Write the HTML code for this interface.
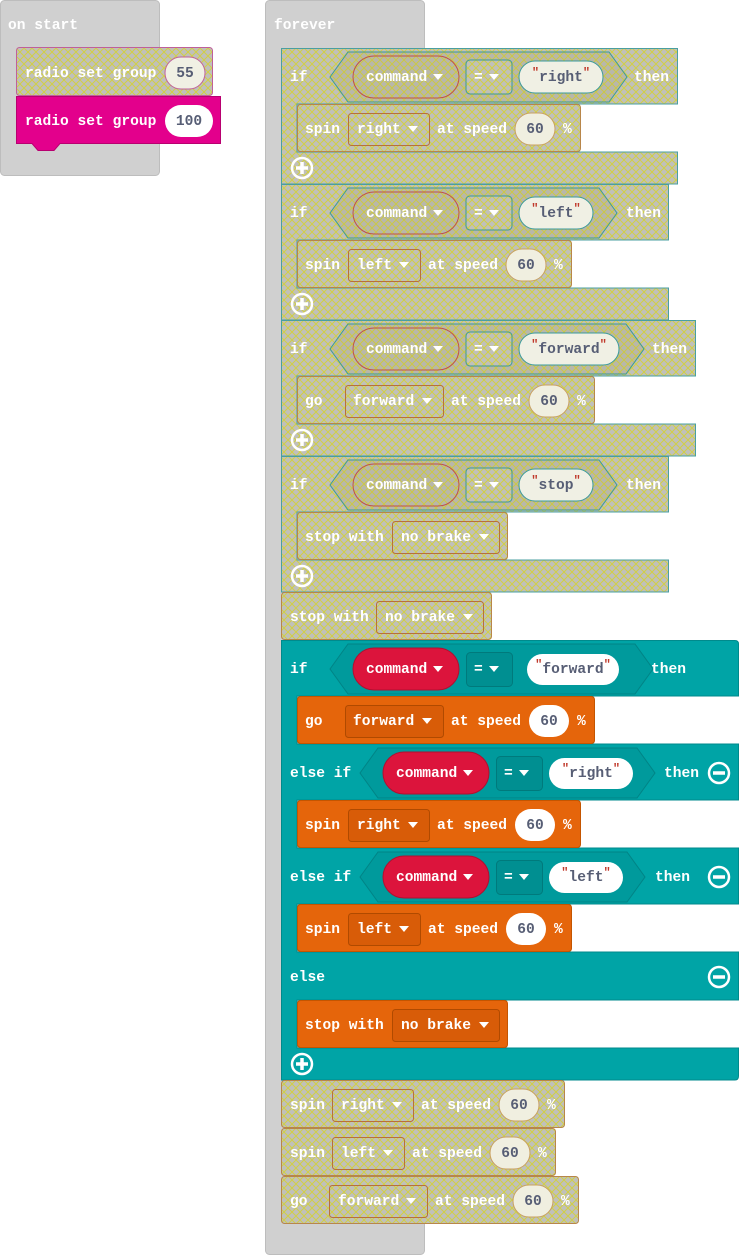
<!DOCTYPE html>
<html><head><meta charset="utf-8"><style>
html,body{margin:0;padding:0;background:#fff;width:739px;height:1256px;overflow:hidden}
svg text{font-family:"Liberation Mono",monospace;font-weight:bold;font-size:14.6px;fill:#fff;dominant-baseline:central;transform:translateY(1px)}
.v{fill:#575e75}
.q{fill:#c0392b;font-size:12px}
</style></head><body>
<svg width="739" height="1256" viewBox="0 0 739 1256" xmlns="http://www.w3.org/2000/svg">
<defs>
<pattern id="hp" width="8" height="8" patternUnits="userSpaceOnUse">
<rect width="8" height="8" fill="#c0c0bb"/>
<path d="M-1,1 L1,-1 M0,8 L8,0 M7,9 L9,7" stroke="#d2cf45" stroke-width="1"/>
<path d="M-1,7 L1,9 M0,0 L8,8 M7,-1 L9,1" stroke="#d2cf45" stroke-width="1"/>
</pattern>
<pattern id="hp2" width="8" height="8" patternUnits="userSpaceOnUse">
<rect width="8" height="8" fill="#b8b7ab"/>
<path d="M-1,1 L1,-1 M0,8 L8,0 M7,9 L9,7" stroke="#ccc845" stroke-width="1"/>
<path d="M-1,7 L1,9 M0,0 L8,8 M7,-1 L9,1" stroke="#ccc845" stroke-width="1"/>
</pattern>
</defs>

<!-- containers -->
<rect x="0.5" y="0.5" width="159" height="175" rx="4" fill="#d0d0d0" stroke="#bdbdbd"/>
<text x="8" y="25">on start</text>
<rect x="265.5" y="0.5" width="159" height="1254" rx="4" fill="#d0d0d0" stroke="#bdbdbd"/>
<text x="274" y="25">forever</text>

<!-- radio -->
<rect x="16.5" y="47.5" width="196" height="48" rx="3" fill="url(#hp)" stroke="#c0609a"/>
<text x="25" y="73">radio set group</text>
<rect x="165" y="57" width="40" height="32" rx="16" fill="#f0f0e4" stroke="#c0609a"/>
<text x="185" y="73" text-anchor="middle" class="v">55</text>
<path d="M16.5 96.5 H220.5 V143.5 H60 L54 150.5 H38 L32 143.5 H16.5 Z" fill="#e3008c" stroke="#b80070"/>
<text x="25" y="121">radio set group</text>
<rect x="165" y="105" width="48" height="32" rx="16" fill="#fff"/>
<text x="189" y="121" text-anchor="middle" class="v">100</text>

<!-- hatched if blocks -->
<path d="M281.5 48.5 H677.5 V104 H297 V152 H677.5 V184 H281.5 Z" fill="url(#hp)" stroke="#4a9fa0"/>
<path d="M281.5 184.5 H668.5 V240 H297 V288 H668.5 V320 H281.5 Z" fill="url(#hp)" stroke="#4a9fa0"/>
<path d="M281.5 320.5 H695.5 V376 H297 V424 H695.5 V456 H281.5 Z" fill="url(#hp)" stroke="#4a9fa0"/>
<path d="M281.5 456.5 H668.5 V512 H297 V560 H668.5 V592 H281.5 Z" fill="url(#hp)" stroke="#4a9fa0"/>

<!-- hatched inner blocks -->
<rect x="297.5" y="104.5" width="283" height="47" rx="3" fill="url(#hp)" stroke="#b8864a"/>
<rect x="297.5" y="240.5" width="274" height="47" rx="3" fill="url(#hp)" stroke="#b8864a"/>
<rect x="297.5" y="376.5" width="297" height="47" rx="3" fill="url(#hp)" stroke="#b8864a"/>
<rect x="297.5" y="512.5" width="210" height="47" rx="3" fill="url(#hp)" stroke="#b8864a"/>
<rect x="281.5" y="592.5" width="210" height="47" rx="3" fill="url(#hp)" stroke="#b8864a"/>

<!-- teal if -->
<path d="M281.5 640.5 H735 Q738.5 640.5 738.5 644 V696 H297 V744 H738.5 V800 H297 V848 H738.5 V904 H297 V952 H738.5 V1000 H297 V1048 H738.5 V1076 Q738.5 1080 735 1080 H281.5 Z" fill="#00a4a6" stroke="#008a8c"/>
<!-- orange inner -->
<rect x="297.5" y="696.5" width="297" height="47" rx="3" fill="#e5650b" stroke="#c45500"/>
<rect x="297.5" y="800.5" width="283" height="47" rx="3" fill="#e5650b" stroke="#c45500"/>
<rect x="297.5" y="904.5" width="274" height="47" rx="3" fill="#e5650b" stroke="#c45500"/>
<rect x="297.5" y="1000.5" width="210" height="47" rx="3" fill="#e5650b" stroke="#c45500"/>

<!-- trailing hatched -->
<rect x="281.5" y="1080.5" width="283" height="47" rx="3" fill="url(#hp)" stroke="#b8864a"/>
<rect x="281.5" y="1128.5" width="274" height="47" rx="3" fill="url(#hp)" stroke="#b8864a"/>
<rect x="281.5" y="1176.5" width="297" height="47" rx="3" fill="url(#hp)" stroke="#b8864a"/>

<!-- ===== if1 ===== -->
<text x="290" y="77">if</text>
<polygon points="330,77 348,52 609,52 627,77 609,102 348,102" fill="url(#hp2)" stroke="#3a9a9a"/>
<rect x="353" y="56" width="106" height="42" rx="21" fill="url(#hp2)" stroke="#c0504a"/>
<text x="366" y="77">command</text><polygon points="433,74 443,74 438,80" fill="#fff"/>
<rect x="466" y="60" width="46" height="34" rx="4" fill="url(#hp)" stroke="#3a9a9a"/>
<text x="474" y="77">=</text><polygon points="489,74 499,74 494,80" fill="#fff"/>
<rect x="519" y="61" width="84" height="32" rx="16" fill="#f0f0e4" stroke="#3a9a9a"/>
<text x="561" y="77" text-anchor="middle" class="v"><tspan class="q" dy="-5">"</tspan><tspan dy="5">right</tspan><tspan class="q" dy="-5">"</tspan></text>
<text x="634" y="77">then</text>

<text x="305" y="129">spin</text>
<rect x="348.5" y="113.5" width="81" height="32" rx="3" fill="none" stroke="#b8703a"/>
<text x="357" y="129">right</text><polygon points="408,126 418,126 413,132" fill="#fff"/>
<text x="437" y="129">at speed</text>
<rect x="515" y="113" width="40" height="32" rx="16" fill="#f0efe0" stroke="#c8a060"/>
<text x="535" y="129" text-anchor="middle" class="v">60</text>
<text x="563" y="129">%</text>

<!-- ===== if2 ===== -->
<text x="290" y="213">if</text>
<polygon points="330,213 348,188 599,188 617,213 599,238 348,238" fill="url(#hp2)" stroke="#3a9a9a"/>
<rect x="353" y="192" width="106" height="42" rx="21" fill="url(#hp2)" stroke="#c0504a"/>
<text x="366" y="213">command</text><polygon points="433,210 443,210 438,216" fill="#fff"/>
<rect x="466" y="196" width="46" height="34" rx="4" fill="url(#hp)" stroke="#3a9a9a"/>
<text x="474" y="213">=</text><polygon points="489,210 499,210 494,216" fill="#fff"/>
<rect x="519" y="197" width="74" height="32" rx="16" fill="#f0f0e4" stroke="#3a9a9a"/>
<text x="556" y="213" text-anchor="middle" class="v"><tspan class="q" dy="-5">"</tspan><tspan dy="5">left</tspan><tspan class="q" dy="-5">"</tspan></text>
<text x="626" y="213">then</text>

<text x="305" y="265">spin</text>
<rect x="348.5" y="249.5" width="72" height="32" rx="3" fill="none" stroke="#b8703a"/>
<text x="357" y="265">left</text><polygon points="399,262 409,262 404,268" fill="#fff"/>
<text x="428" y="265">at speed</text>
<rect x="506" y="249" width="40" height="32" rx="16" fill="#f0efe0" stroke="#c8a060"/>
<text x="526" y="265" text-anchor="middle" class="v">60</text>
<text x="554" y="265">%</text>

<!-- ===== if3 ===== -->
<text x="290" y="349">if</text>
<polygon points="330,349 348,324 626,324 644,349 626,374 348,374" fill="url(#hp2)" stroke="#3a9a9a"/>
<rect x="353" y="328" width="106" height="42" rx="21" fill="url(#hp2)" stroke="#c0504a"/>
<text x="366" y="349">command</text><polygon points="433,346 443,346 438,352" fill="#fff"/>
<rect x="466" y="332" width="46" height="34" rx="4" fill="url(#hp)" stroke="#3a9a9a"/>
<text x="474" y="349">=</text><polygon points="489,346 499,346 494,352" fill="#fff"/>
<rect x="519" y="333" width="100" height="32" rx="16" fill="#f0f0e4" stroke="#3a9a9a"/>
<text x="569" y="349" text-anchor="middle" class="v"><tspan class="q" dy="-5">"</tspan><tspan dy="5">forward</tspan><tspan class="q" dy="-5">"</tspan></text>
<text x="652" y="349">then</text>

<text x="305" y="401">go</text>
<rect x="345.5" y="385.5" width="98" height="32" rx="3" fill="none" stroke="#b8703a"/>
<text x="353" y="401">forward</text><polygon points="422,398 432,398 427,404" fill="#fff"/>
<text x="451" y="401">at speed</text>
<rect x="529" y="385" width="40" height="32" rx="16" fill="#f0efe0" stroke="#c8a060"/>
<text x="549" y="401" text-anchor="middle" class="v">60</text>
<text x="577" y="401">%</text>

<!-- ===== if4 ===== -->
<text x="290" y="485">if</text>
<polygon points="330,485 348,460 599,460 617,485 599,510 348,510" fill="url(#hp2)" stroke="#3a9a9a"/>
<rect x="353" y="464" width="106" height="42" rx="21" fill="url(#hp2)" stroke="#c0504a"/>
<text x="366" y="485">command</text><polygon points="433,482 443,482 438,488" fill="#fff"/>
<rect x="466" y="468" width="46" height="34" rx="4" fill="url(#hp)" stroke="#3a9a9a"/>
<text x="474" y="485">=</text><polygon points="489,482 499,482 494,488" fill="#fff"/>
<rect x="519" y="469" width="74" height="32" rx="16" fill="#f0f0e4" stroke="#3a9a9a"/>
<text x="556" y="485" text-anchor="middle" class="v"><tspan class="q" dy="-5">"</tspan><tspan dy="5">stop</tspan><tspan class="q" dy="-5">"</tspan></text>
<text x="626" y="485">then</text>

<text x="305" y="537">stop with</text>
<rect x="392.5" y="521.5" width="107" height="32" rx="3" fill="none" stroke="#b8703a"/>
<text x="401" y="537">no brake</text><polygon points="479,534 489,534 484,540" fill="#fff"/>

<text x="290" y="617">stop with</text>
<rect x="376.5" y="601.5" width="107" height="32" rx="3" fill="none" stroke="#b8703a"/>
<text x="385" y="617">no brake</text><polygon points="463,614 473,614 468,620" fill="#fff"/>

<!-- plus/minus icons -->
<g fill="none" stroke="#fff" stroke-width="2.5">
<circle cx="302" cy="168" r="10"/><circle cx="302" cy="304" r="10"/><circle cx="302" cy="440" r="10"/><circle cx="302" cy="576" r="10"/><circle cx="302" cy="1064" r="10"/>
<circle cx="719" cy="773" r="10"/><circle cx="719" cy="877" r="10"/><circle cx="719" cy="977" r="10"/>
</g>
<g stroke="#fff" stroke-width="3.5">
<path d="M296 168 H308 M302 162 V174"/><path d="M296 304 H308 M302 298 V310"/><path d="M296 440 H308 M302 434 V446"/><path d="M296 576 H308 M302 570 V582"/><path d="M296 1064 H308 M302 1058 V1070"/>
<path d="M713 773 H725"/><path d="M713 877 H725"/><path d="M713 977 H725"/>
</g>

<!-- ===== teal if ===== -->
<text x="290" y="669">if</text>
<polygon points="330,669 348,644 635,644 653,669 635,694 348,694" fill="#009a9c" stroke="#008486"/>
<rect x="353" y="648" width="106" height="42" rx="21" fill="#dc143c" stroke="#b01030"/>
<text x="366" y="669">command</text><polygon points="433,666 443,666 438,672" fill="#fff"/>
<rect x="466.5" y="652.5" width="46" height="34" rx="4" fill="#008f91" stroke="#007a7c"/>
<text x="474" y="669">=</text><polygon points="489,666 499,666 494,672" fill="#fff"/>
<rect x="527" y="654" width="92" height="31" rx="15.5" fill="#fff"/>
<text x="573" y="669" text-anchor="middle" class="v"><tspan class="q" dy="-5">"</tspan><tspan dy="5">forward</tspan><tspan class="q" dy="-5">"</tspan></text>
<text x="651" y="669">then</text>

<text x="305" y="721">go</text>
<rect x="345.5" y="705.5" width="98" height="32" rx="3" fill="#d85c08" stroke="#b04a00"/>
<text x="353" y="721">forward</text><polygon points="422,718 432,718 427,724" fill="#fff"/>
<text x="451" y="721">at speed</text>
<rect x="529" y="705" width="40" height="32" rx="16" fill="#fff"/>
<text x="549" y="721" text-anchor="middle" class="v">60</text>
<text x="577" y="721">%</text>

<text x="290" y="773">else if</text>
<polygon points="360,773 378,748 637,748 655,773 637,798 378,798" fill="#009a9c" stroke="#008486"/>
<rect x="383" y="752" width="106" height="42" rx="21" fill="#dc143c" stroke="#b01030"/>
<text x="396" y="773">command</text><polygon points="463,770 473,770 468,776" fill="#fff"/>
<rect x="496.5" y="756.5" width="46" height="34" rx="4" fill="#008f91" stroke="#007a7c"/>
<text x="504" y="773">=</text><polygon points="519,770 529,770 524,776" fill="#fff"/>
<rect x="549" y="758" width="84" height="31" rx="15.5" fill="#fff"/>
<text x="591" y="773" text-anchor="middle" class="v"><tspan class="q" dy="-5">"</tspan><tspan dy="5">right</tspan><tspan class="q" dy="-5">"</tspan></text>
<text x="664" y="773">then</text>

<text x="305" y="825">spin</text>
<rect x="348.5" y="809.5" width="81" height="32" rx="3" fill="#d85c08" stroke="#b04a00"/>
<text x="357" y="825">right</text><polygon points="408,822 418,822 413,828" fill="#fff"/>
<text x="437" y="825">at speed</text>
<rect x="515" y="809" width="40" height="32" rx="16" fill="#fff"/>
<text x="535" y="825" text-anchor="middle" class="v">60</text>
<text x="563" y="825">%</text>

<text x="290" y="877">else if</text>
<polygon points="360,877 378,852 627,852 645,877 627,902 378,902" fill="#009a9c" stroke="#008486"/>
<rect x="383" y="856" width="106" height="42" rx="21" fill="#dc143c" stroke="#b01030"/>
<text x="396" y="877">command</text><polygon points="463,874 473,874 468,880" fill="#fff"/>
<rect x="496.5" y="860.5" width="46" height="34" rx="4" fill="#008f91" stroke="#007a7c"/>
<text x="504" y="877">=</text><polygon points="519,874 529,874 524,880" fill="#fff"/>
<rect x="549" y="862" width="74" height="31" rx="15.5" fill="#fff"/>
<text x="586" y="877" text-anchor="middle" class="v"><tspan class="q" dy="-5">"</tspan><tspan dy="5">left</tspan><tspan class="q" dy="-5">"</tspan></text>
<text x="655" y="877">then</text>

<text x="305" y="929">spin</text>
<rect x="348.5" y="913.5" width="72" height="32" rx="3" fill="#d85c08" stroke="#b04a00"/>
<text x="357" y="929">left</text><polygon points="399,926 409,926 404,932" fill="#fff"/>
<text x="428" y="929">at speed</text>
<rect x="506" y="913" width="40" height="32" rx="16" fill="#fff"/>
<text x="526" y="929" text-anchor="middle" class="v">60</text>
<text x="554" y="929">%</text>

<text x="290" y="977">else</text>

<text x="305" y="1025">stop with</text>
<rect x="392.5" y="1009.5" width="107" height="32" rx="3" fill="#d85c08" stroke="#b04a00"/>
<text x="401" y="1025">no brake</text><polygon points="479,1022 489,1022 484,1028" fill="#fff"/>

<!-- trailing -->
<text x="290" y="1105">spin</text>
<rect x="332.5" y="1089.5" width="81" height="32" rx="3" fill="none" stroke="#b8703a"/>
<text x="341" y="1105">right</text><polygon points="392,1102 402,1102 397,1108" fill="#fff"/>
<text x="421" y="1105">at speed</text>
<rect x="499" y="1089" width="40" height="32" rx="16" fill="#f0efe0" stroke="#c8a060"/>
<text x="519" y="1105" text-anchor="middle" class="v">60</text>
<text x="547" y="1105">%</text>

<text x="290" y="1153">spin</text>
<rect x="332.5" y="1137.5" width="72" height="32" rx="3" fill="none" stroke="#b8703a"/>
<text x="341" y="1153">left</text><polygon points="383,1150 393,1150 388,1156" fill="#fff"/>
<text x="412" y="1153">at speed</text>
<rect x="490" y="1137" width="40" height="32" rx="16" fill="#f0efe0" stroke="#c8a060"/>
<text x="510" y="1153" text-anchor="middle" class="v">60</text>
<text x="538" y="1153">%</text>

<text x="290" y="1201">go</text>
<rect x="329.5" y="1185.5" width="98" height="32" rx="3" fill="none" stroke="#b8703a"/>
<text x="338" y="1201">forward</text><polygon points="406,1198 416,1198 411,1204" fill="#fff"/>
<text x="435" y="1201">at speed</text>
<rect x="513" y="1185" width="40" height="32" rx="16" fill="#f0efe0" stroke="#c8a060"/>
<text x="533" y="1201" text-anchor="middle" class="v">60</text>
<text x="561" y="1201">%</text>
</svg>
</body></html>
